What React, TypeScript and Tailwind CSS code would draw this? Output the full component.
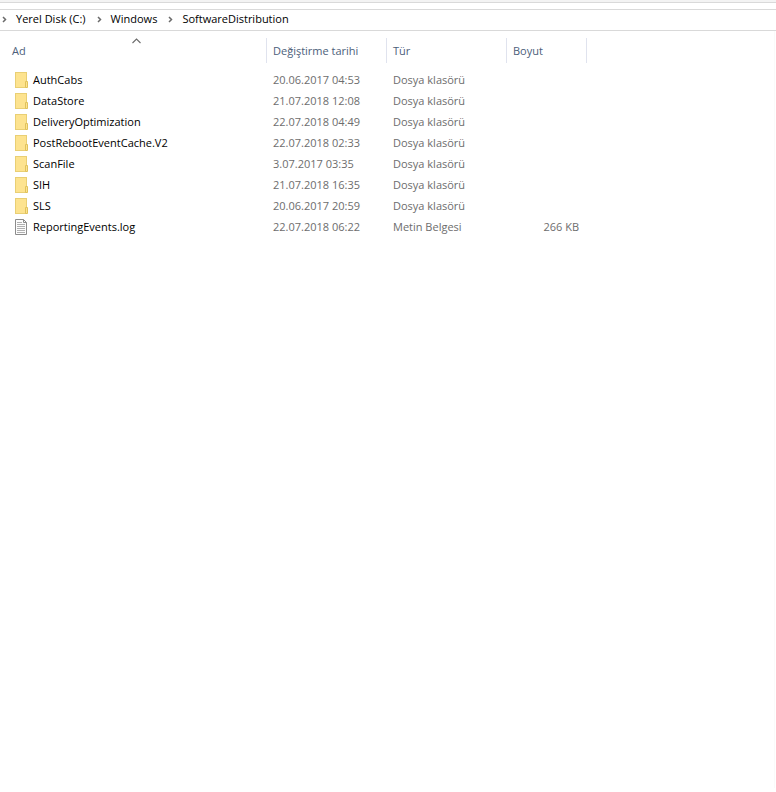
import { Fragment, useState } from "react"

interface Entry {
  name: string
  modified: string
  type: string
  size?: string
  kind: "folder" | "text"
}

const entries: Entry[] = [
  { name: "AuthCabs", modified: "20.06.2017 04:53", type: "Dosya klasörü", kind: "folder" },
  { name: "DataStore", modified: "21.07.2018 12:08", type: "Dosya klasörü", kind: "folder" },
  { name: "DeliveryOptimization", modified: "22.07.2018 04:49", type: "Dosya klasörü", kind: "folder" },
  { name: "PostRebootEventCache.V2", modified: "22.07.2018 02:33", type: "Dosya klasörü", kind: "folder" },
  { name: "ScanFile", modified: "3.07.2017 03:35", type: "Dosya klasörü", kind: "folder" },
  { name: "SIH", modified: "21.07.2018 16:35", type: "Dosya klasörü", kind: "folder" },
  { name: "SLS", modified: "20.06.2017 20:59", type: "Dosya klasörü", kind: "folder" },
  { name: "ReportingEvents.log", modified: "22.07.2018 06:22", type: "Metin Belgesi", size: "266 KB", kind: "text" },
]

const crumbs = ["Yerel Disk (C:)", "Windows", "SoftwareDistribution"]

function ChevronIcon() {
  return (
    <svg width="5" height="7" viewBox="0 0 5 7" className="shrink-0" aria-hidden="true">
      <path d="M1 1l2.5 2.5L1 6" fill="none" stroke="#6b6b6b" strokeWidth="1.5" />
    </svg>
  )
}

function FolderIcon() {
  return (
    <svg width="13" height="16" viewBox="0 0 13 16" className="shrink-0" aria-hidden="true">
      <rect x="0.5" y="0.5" width="11" height="15" fill="#fde38f" stroke="#e9cf74" />
      <path d="M10.5 9.5h2v6h-2z" fill="#fde38f" stroke="#e0c25c" />
    </svg>
  )
}

function TextFileIcon() {
  return (
    <svg width="13" height="16" viewBox="0 0 13 16" className="shrink-0" aria-hidden="true">
      <path d="M0.5 0.5h8l3 3v12h-11z" fill="#fcfcfc" stroke="#8c8c8c" />
      <path d="M8.5 0.5v3h3" fill="none" stroke="#8c8c8c" />
      <path d="M2 3.5h5M2 5.5h8M2 7.5h8M2 9.5h8M2 11.5h8M2 13.5h8" stroke="#b0b0b0" />
    </svg>
  )
}

function HeaderCell({ label, onClick, children, className = "pl-1.5" }: {
  label: string
  onClick?: () => void
  children?: React.ReactNode
  className?: string
}) {
  return (
    <th scope="col" className="relative p-0 pb-1.5 font-normal">
      {children}
      <button
        type="button"
        onClick={onClick}
        className={`flex h-[25px] w-full items-center border-r border-[#e0e3ee] text-left text-[#4c607a] ${className}`}
      >
        {label}
      </button>
    </th>
  )
}

export default function App() {
  const [descending, setDescending] = useState(false)
  const rows = descending ? [...entries].reverse() : entries

  return (
    <div className="min-h-screen bg-white font-['Open_Sans','Noto_Sans',sans-serif] text-[11px] leading-4 text-black">
      <div className="h-[3px] border-b border-[#d9d9d9] bg-[#f3f3f3]" />

      <nav aria-label="Konum" className="mt-1.5 flex h-[22px] items-center border-y border-[#d9d9d9] pb-0.5 pl-0.5">
        {crumbs.map((crumb, i) => (
          <Fragment key={crumb}>
            <span className={i === 0 ? "w-[14px]" : "w-[25px] pl-[11px]"}>
              <ChevronIcon />
            </span>
            <a href="#" className="whitespace-nowrap">{crumb}</a>
          </Fragment>
        ))}
      </nav>

      <main className="mr-[1px] min-h-[757px] border-r border-[#fafafa] pt-[7px]">
        <table className="w-full table-fixed border-collapse text-left">
          <colgroup>
            <col className="w-[267px]" />
            <col className="w-[120px]" />
            <col className="w-[120px]" />
            <col className="w-[80px]" />
            <col />
          </colgroup>
          <thead>
            <tr>
              <HeaderCell label="Ad" className="pl-3" onClick={() => setDescending(!descending)}>
                <svg
                  width="9"
                  height="6"
                  viewBox="0 0 9 6"
                  className={`absolute top-0 left-[132px] ${descending ? "rotate-180" : ""}`}
                  aria-hidden="true"
                >
                  <path d="M0.5 5l4-4 4 4" fill="none" stroke="#6b6b6b" strokeWidth="1.1" />
                </svg>
              </HeaderCell>
              <HeaderCell label="Değiştirme tarihi" />
              <HeaderCell label="Tür" />
              <HeaderCell label="Boyut" />
              <td />
            </tr>
          </thead>
          <tbody className="text-[#6d6d6d]">
            {rows.map((entry) => (
              <tr key={entry.name} className="h-[21px] whitespace-nowrap">
                <td className="p-0 pl-[15px] text-black">
                  <div className="flex items-center gap-[5px]">
                    {entry.kind === "folder" ? <FolderIcon /> : <TextFileIcon />}
                    {entry.name}
                  </div>
                </td>
                <td className="p-0 pl-1.5">{entry.modified}</td>
                <td className="p-0 pl-1.5">{entry.type}</td>
                <td className="p-0 pr-2 text-right">{entry.size}</td>
                <td />
              </tr>
            ))}
          </tbody>
        </table>
      </main>
    </div>
  )
}
